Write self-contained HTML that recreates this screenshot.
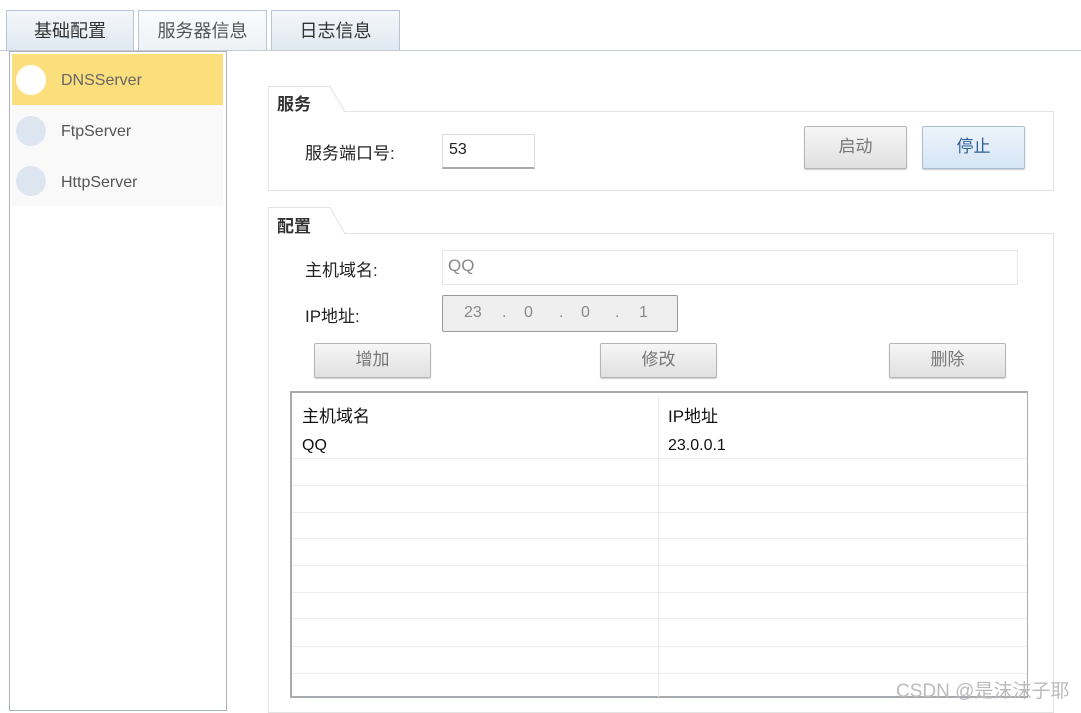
<!DOCTYPE html>
<html><head><meta charset="utf-8"><style>
*{margin:0;padding:0;box-sizing:border-box}
body{width:1081px;height:704px;background:#fff;position:relative;overflow:hidden;font-family:"Liberation Sans","Noto Sans CJK SC",sans-serif;color:#222}
.a{position:absolute}
.tab{position:absolute;top:10px;height:41px;border:1px solid #b8c6d4;border-bottom:none;background:linear-gradient(#f4f7fa,#dfe8f1);font-size:18px;text-align:center;line-height:40px;color:#333}
.btn{position:absolute;border:1px solid #b5b5b5;border-radius:2px;background:linear-gradient(#f6f6f6,#e0e0e0);font-size:17px;text-align:center;color:#777;box-shadow:0 1px 1px #ccc}
.lbl{position:absolute;font-size:17px;color:#222}
.row{position:absolute;left:0;right:0;height:1px;background:#ececec}
</style></head><body>
<div class="tab" style="left:6px;width:128px">基础配置</div>
<div class="tab" style="left:138px;width:129px;background:linear-gradient(#fafbfc,#eef2f6);color:#555">服务器信息</div>
<div class="tab" style="left:271px;width:129px">日志信息</div>
<div class="a" style="left:0;top:50px;width:1081px;height:1px;background:#c5ccd4"></div>
<div class="a" style="left:9px;top:51px;width:218px;height:660px;border:1px solid #a9b1ba;background:#fff"></div>
<div class="a" style="left:12px;top:54px;width:211px;height:152px;background:#f9f9f9"></div>
<div class="a" style="left:12px;top:54px;width:211px;height:51px;background:#fcdf7d"></div>
<div class="a" style="left:16px;top:65px;width:30px;height:30px;border-radius:50%;background:#fff"></div>
<div class="a" style="left:16px;top:116px;width:30px;height:30px;border-radius:50%;background:#dde6f0"></div>
<div class="a" style="left:16px;top:166px;width:30px;height:30px;border-radius:50%;background:#dde6f0"></div>
<div class="a" style="left:61px;top:72px;font-size:16px;color:#666">DNSServer</div>
<div class="a" style="left:61px;top:123px;font-size:16px;color:#555">FtpServer</div>
<div class="a" style="left:61px;top:174px;font-size:16px;color:#555">HttpServer</div>

<div class="a" style="left:268px;top:111px;width:786px;height:80px;border:1px solid #e3e3e3"></div>
<svg class="a" style="left:268px;top:86px" width="90" height="27"><path d="M0.5 27V0.5H62L77 26" fill="#fff" stroke="#e3e3e3"/></svg>
<div class="a" style="left:277px;top:90px;font-size:17px;font-weight:bold;color:#333">服务</div>
<div class="lbl" style="left:305px;top:139px">服务端口号:</div>
<div class="a" style="left:442px;top:134px;width:93px;height:35px;border:1px solid #ddd;border-bottom:2px solid #aaa;font-size:16px;padding:6px 6px">53</div>
<div class="btn" style="left:804px;top:126px;width:103px;height:43px;line-height:40px">启动</div>
<div class="btn" style="left:922px;top:126px;width:103px;height:43px;line-height:40px;background:linear-gradient(#eef4fb,#d5e5f5);border-color:#a8bfd8;color:#2e5f98">停止</div>

<div class="a" style="left:268px;top:233px;width:786px;height:480px;border:1px solid #e3e3e3"></div>
<svg class="a" style="left:268px;top:207px" width="90" height="28"><path d="M0.5 28V0.5H62L77 27" fill="#fff" stroke="#e3e3e3"/></svg>
<div class="a" style="left:277px;top:212px;font-size:17px;font-weight:bold;color:#333">配置</div>
<div class="lbl" style="left:305px;top:256px">主机域名:</div>
<div class="a" style="left:442px;top:250px;width:576px;height:35px;border:1px solid #e6e6e6;font-size:17px;color:#888;padding:5px 5px">QQ</div>
<div class="lbl" style="left:305px;top:302px">IP地址:</div>
<div class="a" style="left:442px;top:295px;width:236px;height:37px;border:1px solid #999;border-radius:2px;background:#efefef;font-size:16px;color:#888;line-height:33px">
<span class="a" style="left:21px">23</span><span class="a" style="left:59px">.</span><span class="a" style="left:81px">0</span><span class="a" style="left:116px">.</span><span class="a" style="left:138px">0</span><span class="a" style="left:172px">.</span><span class="a" style="left:196px">1</span></div>
<div class="btn" style="left:314px;top:343px;width:117px;height:35px;line-height:32px">增加</div>
<div class="btn" style="left:600px;top:343px;width:117px;height:35px;line-height:32px">修改</div>
<div class="btn" style="left:889px;top:343px;width:117px;height:35px;line-height:32px">删除</div>

<div class="a" style="left:290px;top:391px;width:738px;height:307px;border:2px solid #a8acb0;border-right-width:1px;background:#fff">
<div class="a" style="left:366px;top:2px;width:1px;height:302px;background:#ececec"></div>
<div class="a" style="left:10px;top:9px;font-size:17px;color:#111">主机域名</div>
<div class="a" style="left:376px;top:9px;font-size:17px;color:#111">IP地址</div>
<div class="a" style="left:10px;top:44px;font-size:16px;color:#111">QQ</div>
<div class="a" style="left:376px;top:44px;font-size:16px;color:#111">23.0.0.1</div>
<div class="row" style="top:65px"></div><div class="row" style="top:92px"></div><div class="row" style="top:119px"></div><div class="row" style="top:145px"></div><div class="row" style="top:172px"></div><div class="row" style="top:199px"></div><div class="row" style="top:225px"></div><div class="row" style="top:253px"></div><div class="row" style="top:280px"></div>
</div>
<div class="a" style="left:896px;top:676px;font-size:19px;color:#bbb">CSDN @是沫沫子耶</div>
</body></html>
